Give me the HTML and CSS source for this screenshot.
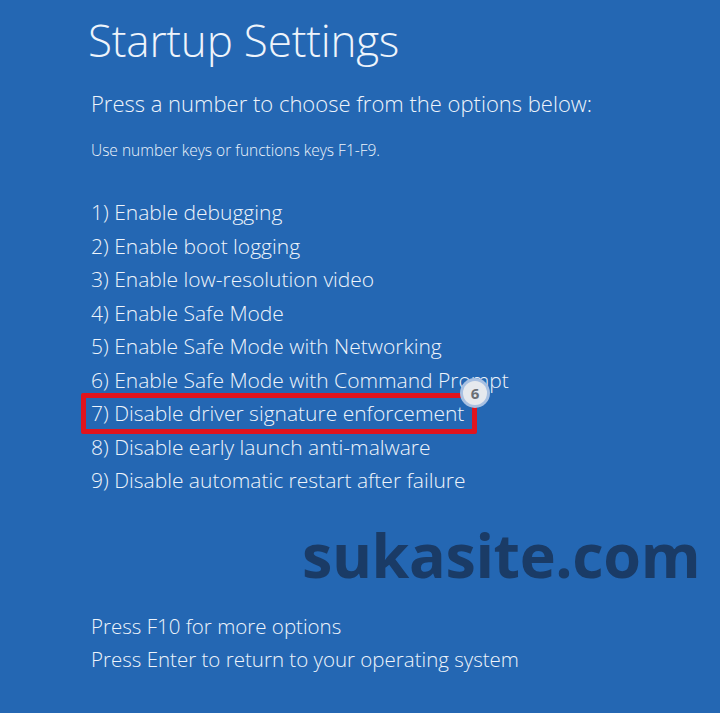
FILE: index.html
```html
<!DOCTYPE html>
<html lang="en">
<head>
    <meta charset="UTF-8">
    <meta name="viewport" content="width=device-width, initial-scale=1.0">
    <title>Startup Settings</title>
    <link rel="stylesheet" href="styles.css">
</head>
<body>
    <div class="screen">
        <h1>Startup Settings</h1>
        <p class="lead">Press a number to choose from the options below:</p>
        <p class="hint">Use number keys or functions keys F1-F9.</p>

        <ul class="options">
            <li>1) Enable debugging</li>
            <li>2) Enable boot logging</li>
            <li>3) Enable low-resolution video</li>
            <li>4) Enable Safe Mode</li>
            <li>5) Enable Safe Mode with Networking</li>
            <li>6) Enable Safe Mode with Command Prompt</li>
            <li class="marked">7) Disable driver signature enforcement<span class="badge">6</span></li>
            <li>8) Disable early launch anti-malware</li>
            <li>9) Disable automatic restart after failure</li>
        </ul>

        <div class="watermark">sukasite.com</div>

        <div class="footer">
            <p>Press F10 for more options</p>
            <p>Press Enter to return to your operating system</p>
        </div>
    </div>
</body>
</html>
```

FILE: styles.css
```css
/* Basic reset */
*, *::before, *::after {
    margin: 0;
    padding: 0;
    box-sizing: border-box;
}

body {
    background-color: #2467b3;
    color: #eef4fb;
    font-family: "Open Sans", "Noto Sans", sans-serif;
    font-weight: 300;
}

.screen {
    width: 720px;
    height: 713px;
    padding: 13px 0 0 88px;
    display: flex;
    flex-direction: column;
}

h1 {
    font-size: 44px;
    font-weight: 300;
    line-height: 54px;
    letter-spacing: -0.2px;
}

.lead {
    margin-top: 23px;
    margin-left: 3px;
    font-size: 22px;
    line-height: 26px;
}

.hint {
    margin-top: 24px;
    margin-left: 3px;
    font-size: 15.5px;
    line-height: 20px;
}

.options {
    list-style: none;
    margin-top: 36px;
    margin-left: 3px;
}

.options li {
    font-size: 21px;
    line-height: 33.5px;
    height: 33.5px;
    position: relative;
}

/* red highlight round option 7 */
.options li.marked::before {
    content: "";
    position: absolute;
    left: -10px;
    top: -4px;
    width: 396px;
    height: 41px;
    border: 5px solid #e0141e;
    border-radius: 2px;
}

.badge {
    position: absolute;
    left: 372px;
    top: -16px;
    width: 24px;
    height: 24px;
    border-radius: 50%;
    background: #e6e9ee;
    box-shadow: 0 0 0 3px #a8c0e2;
    color: #6b6f75;
    font-family: "Open Sans", sans-serif;
    font-weight: 700;
    font-size: 15px;
    line-height: 24px;
    text-align: center;
}

.watermark {
    margin-top: 22px;
    margin-left: 214px;
    font-family: "Open Sans", sans-serif;
    font-weight: 700;
    font-size: 61px;
    line-height: 70px;
    color: #1a3b66;
    letter-spacing: -0.4px;
}

.footer {
    margin-top: 20px;
    margin-left: 3px;
}

.footer p {
    font-size: 20.5px;
    line-height: 33.5px;
}
```
